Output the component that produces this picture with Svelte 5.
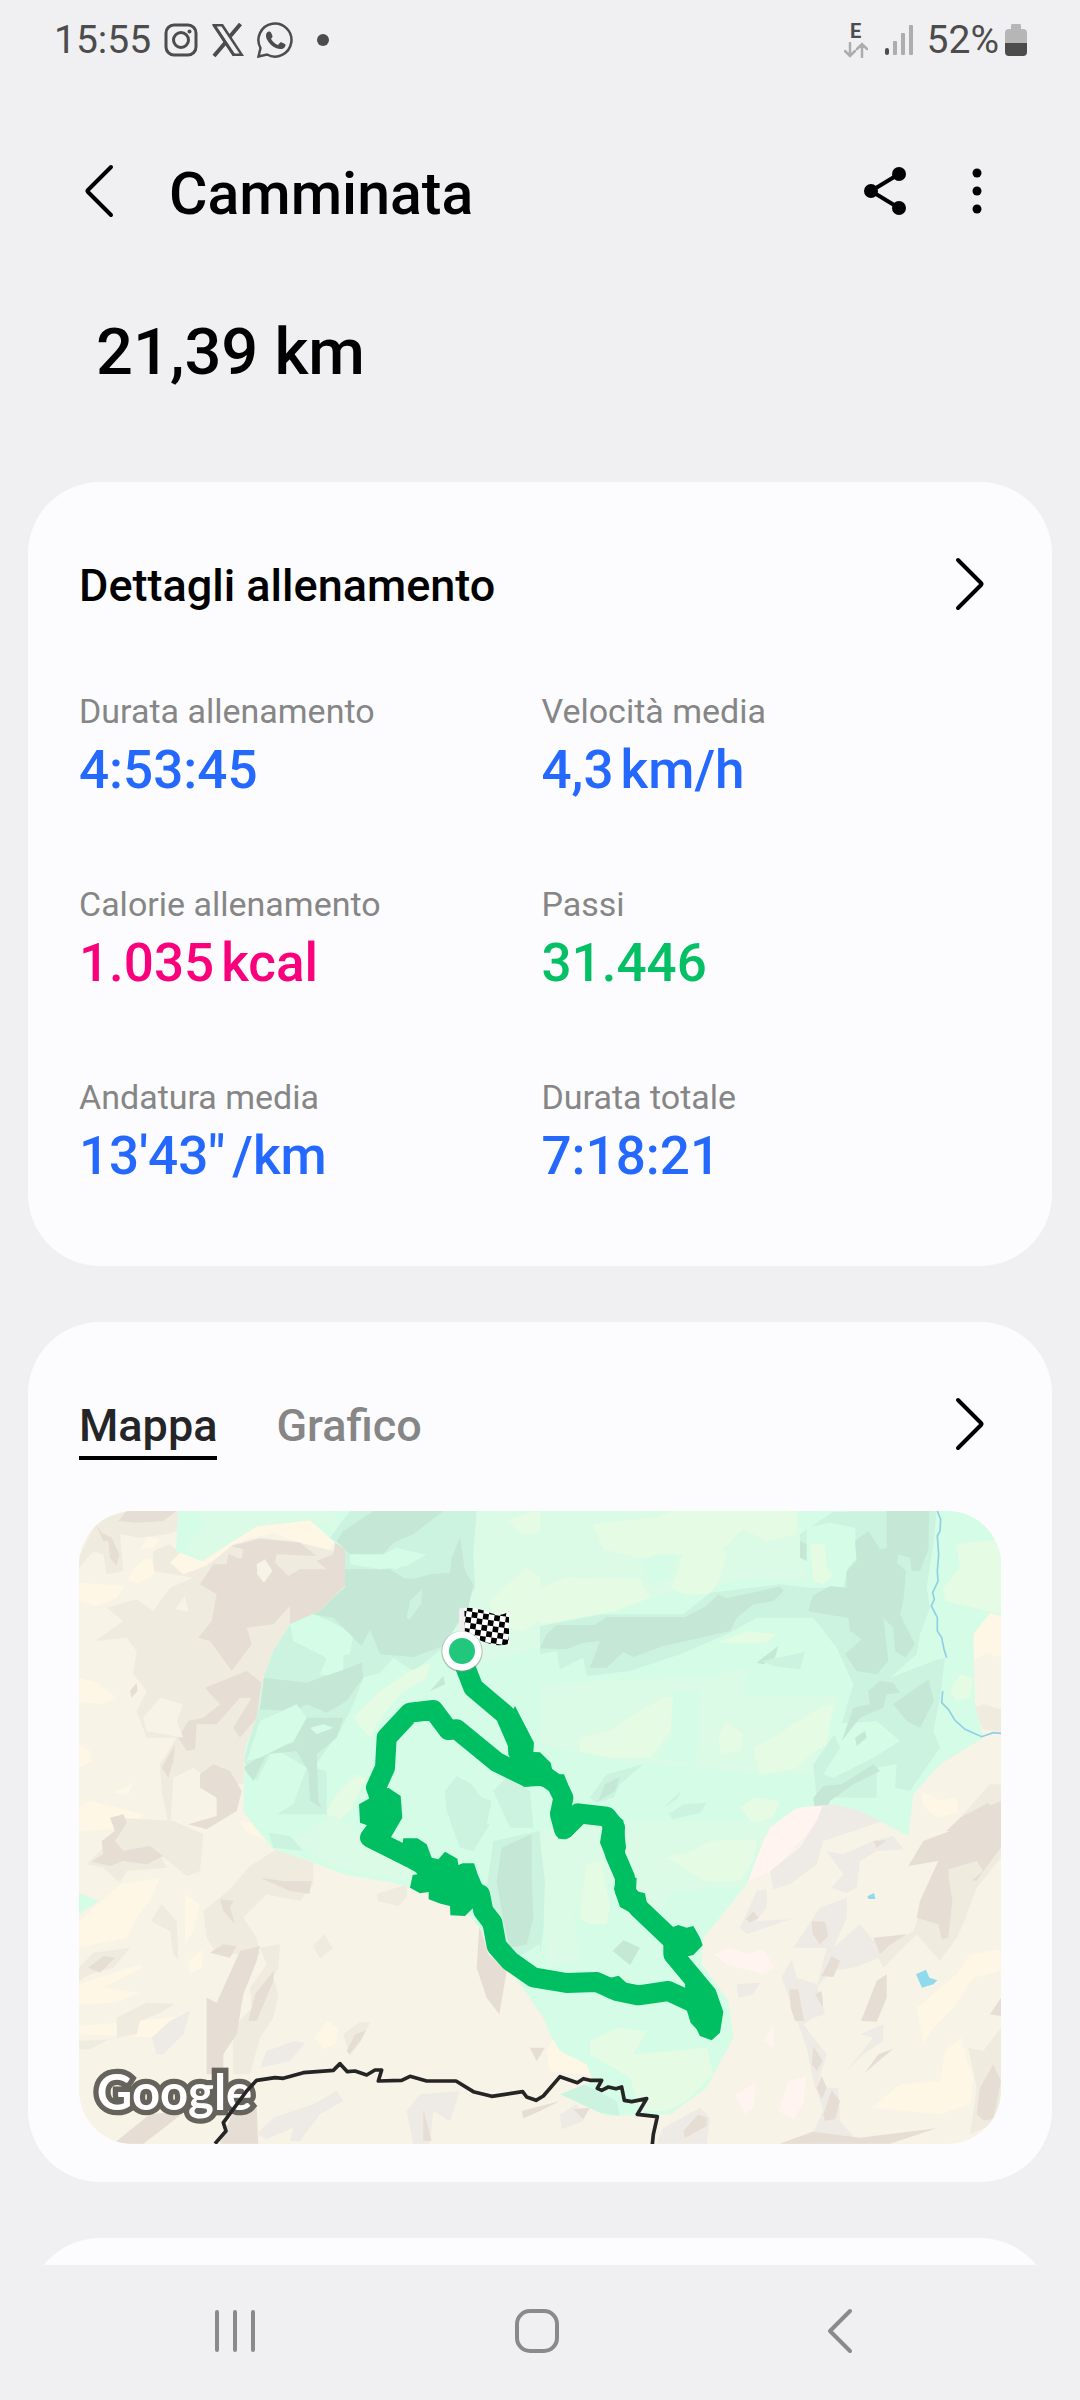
<script lang="ts">
  const stats = [
    { label: 'Durata allenamento', value: '4:53:45', unit: '', color: 'blue' },
    { label: 'Velocità media', value: '4,3', unit: 'km/h', color: 'blue' },
    { label: 'Calorie allenamento', value: '1.035', unit: 'kcal', color: 'pink' },
    { label: 'Passi', value: '31.446', unit: '', color: 'green' },
    { label: 'Andatura media', value: `13'43"`, unit: '/km', color: 'blue' },
    { label: 'Durata totale', value: '7:18:21', unit: '', color: 'blue' }
  ];

  let activeTab = $state('Mappa');
  const tabs = ['Mappa', 'Grafico'];

  // Terrain relief, split in four tiles. Each shape is [tone, points]
  const tiles = [
    {
      x: 0,
      y: 0,
      shapes: [
        ['sand-light', '320,215 360,180 430,212 520,150 590,108 750,88 822,150 800,190 640,125 560,145 450,215 370,252'],
        ['sand-shade', '57,200 110,90 200,60 355,60 350,120 320,130 240,140 180,130 190,240 140,250 130,190 100,180 57,230'],
        ['sand-shade', '280,180 330,160 360,185 330,215 370,250 440,225 520,160 600,140 700,150 820,180 855,210 850,260 780,350 690,400 640,480 610,560 590,690 555,770 550,880 470,880 400,830 340,860 330,1020 305,900 300,820 350,740 260,740 230,660 260,600 220,550 230,480 200,440 105,450 190,390 140,350 230,325 280,360 330,290 400,260 280,240'],
        ['sand-dark', '420,280 460,220 500,220 505,190 545,205 550,175 515,165 600,143 720,155 770,195 650,190 645,215 685,255 720,235 800,235 770,210 820,190 825,155 855,172 855,285 780,360 690,400 690,345 640,400 560,410 575,460 515,540 450,450 415,440 455,390 470,310'],
        ['sand-dark', '435,590 560,540 605,575 590,680 540,740 520,710 575,620 540,620 470,700 410,700 405,775 380,780 355,740 385,690 430,680 480,640'],
        ['sand-dark', '420,850 460,820 510,840 545,900 530,960 440,1015 385,1000 470,975 470,920 420,890'],
        ['sand-dark', '175,90 200,60 350,60 310,90 235,95'],
        ['sand-dark', '108,100 130,150 145,150 150,200 170,225 178,190 155,140 125,125'],
        ['sand-dark', '305,830 345,760 340,810 325,860'],
        ['sand-dark', '210,600 230,575 232,600 215,620'],
        ['sand', '590,220 615,205 637,240 612,275 592,250'],
        ['sand', '345,355 375,315 385,362'],
        ['sand', '250,680 300,620 370,640 350,690 370,740 260,720'],
        ['sand-light', '57,275 195,285 170,320 110,345 57,330'],
        ['sand-light', '57,560 110,575 170,620 130,640 57,632'],
        ['sand-light', '205,270 215,240 250,205 275,205 285,250 235,275'],
        ['sand-light', '240,175 265,138 300,145 280,170'],
        ['sand-light', '57,760 90,780 95,810 57,830'],
        ['sand-light', '160,905 220,875 205,910 185,912']
      ]
    },
    {
      x: 0,
      y: 990,
      shapes: [
        ['sand-light', '57,300 180,190 300,170 270,240 230,290 200,350 57,380'],
        ['sand-light', '57,-40 90,-60 250,-20 220,20 57,30'],
        ['sand-light', '57,490 240,430 245,440 130,500 240,515 170,545 57,550'],
        ['sand-light', '57,615 180,605 370,585 375,610 300,650 57,640'],
        ['sand-light', '375,220 420,250 400,330 375,370'],
        ['sand-light', '385,420 430,385 425,440 390,460'],
        ['sand-light', '765,650 800,600 835,620 830,665 790,685'],
        ['sand-light', '540,0 590,10 620,60 560,30'],
        ['sand-shade', '80,130 150,60 180,-10 340,0 430,40 420,150 380,165 300,100 320,140 200,150 180,185 130,140'],
        ['sand-shade', '430,270 510,205 570,135 650,85 760,125 760,190 720,240 620,220 590,250 550,290 590,350 600,400 540,400 470,400 440,350'],
        ['sand-shade', '600,380 660,370 655,440 640,470 655,520 640,590 600,650 570,760 520,760 520,620 575,560 570,500 620,430'],
        ['sand-shade', '57,440 100,395 210,380 160,440 90,460 57,480'],
        ['sand-shade', '170,590 260,545 345,548 300,575 240,600 230,640 170,650'],
        ['sand-shade', '950,220 1040,190 1040,230 1015,255 955,240'],
        ['sand-shade', '758,375 793,340 818,382 780,412'],
        ['sand-shade', '273,300 305,250 350,300 355,415 340,400 330,330'],
        ['sand-shade', '850,640 900,603 930,605 900,665 870,705'],
        ['sand-shade', '57,660 150,655 90,685 57,685'],
        ['sand-dark', '125,60 165,30 150,-10 190,-20 200,5 165,60 190,90 270,75 310,105 260,130 190,120 150,135 95,122 130,100'],
        ['sand-dark', '600,170 670,180 755,180 748,218 690,210'],
        ['sand-dark', '540,390 600,375 590,420 550,520 530,640 490,700 490,760 440,760 440,530 470,545'],
        ['sand-dark', '640,450 640,480 590,600 565,600 585,520'],
        ['sand-dark', '450,395 490,370 530,375 510,410'],
        ['sand-dark', '480,235 520,240 510,260 525,310 490,270'],
        ['sand-dark', '85,440 130,405 165,410 120,455'],
        ['sand-dark', '1258,310 1285,400 1340,450 1318,580 1280,530 1250,440'],
        ['sand-dark', '860,690 885,640 918,628 900,660 868,700'],
        ['sand-dark', '1410,680 1455,680 1430,720'],
        ['sand-dark', '160,968 270,880 380,868 300,930 250,968'],
        ['sand-dark', '480,968 520,870 590,860 595,968'],
        ['haze', '275,650 330,600 390,570 370,640 310,700 290,700'],
        ['haze', '620,690 700,660 735,665 690,720 600,740'],
        ['haze', '590,940 640,890 760,850 830,810 850,840 780,880 720,960 690,960 700,920 620,955'],
        ['haze', '1040,870 1080,820 1200,810 1170,900 1120,870 1110,968 1060,968'],
        ['sand-dark', '1090,865 1115,960 1090,960'],
        ['sand-dark', '1385,870 1500,840 1440,870 1390,892'],
        ['mint', '57,215 115,240 57,280']
      ]
    },
    {
      x: 1440,
      y: 0,
      shapes: [
        ['sand-light', '1300,430 1350,365 1383,375 1383,500 1340,485 1297,510'],
        ['sand-shade', '1300,650 1330,640 1383,655 1383,722 1330,715'],
        ['sand-light', '1145,900 1200,930 1250,920 1255,965 1190,980 1150,945'],
        ['sand-shade', '1270,970 1350,880 1383,880 1383,1020 1230,1020'],
        ['sand-dark', '1220,1020 1260,980 1345,935 1383,1020']
      ]
    },
    {
      x: 1440,
      y: 990,
      shapes: [
        ['blush', '625,180 660,80 700,0 800,-50 850,-40 820,20 780,60 700,150'],
        ['haze', '690,150 780,80 830,0 850,-50 950,-50 1030,0 850,60 830,130 750,190 700,205'],
        ['haze', '860,90 910,100 1000,60 1060,45 1090,85 1010,90 960,120 950,200 920,215 875,200 910,160'],
        ['haze', '760,380 840,260 920,230 920,290 880,380 960,310 1000,360 1100,340 1050,400 940,440 870,450 830,500 860,380'],
        ['haze', '600,320 650,210 680,205 680,260 650,300 750,295 620,340'],
        ['haze', '725,470 755,415 770,470 830,490 855,580 820,590 790,610 860,700 830,800 895,800 900,900 960,968 720,968 820,930 850,870 820,780 800,680'],
        ['haze', '370,920 480,860 510,890 500,968 350,968'],
        ['haze', '60,880 110,850 130,900 65,925'],
        ['haze', '590,490 660,485 640,520 595,530'],
        ['haze', '920,750 1000,650 960,640 1030,610 1030,660 970,700'],
        ['sand-shade', '1010,400 1120,330 1200,120 1280,0 1383,-40 1383,150 1320,200 1250,350 1200,420 1130,340 1030,440'],
        ['sand-shade', '1285,680 1330,690 1383,620 1383,900 1290,940 1310,800'],
        ['sand', '1310,200 1383,110 1383,380 1240,390'],
        ['sand-dark', '1105,135 1150,60 1230,30 1260,-10 1383,-60 1383,80 1330,150 1310,180 1225,160 1237,240 1225,350 1205,355 1195,310 1130,290 1140,240 1195,120'],
        ['sand-shade', '1225,145 1310,120 1330,150 1240,225'],
        ['sand-dark', '1000,350 1100,340 1045,375 1020,400'],
        ['sand-dark', '815,300 855,302 865,345 840,370 818,340'],
        ['sand-dark', '845,465 875,405 900,420 880,468'],
        ['sand-dark', '963,600 1010,480 1040,460 1040,530 1010,602'],
        ['sand-dark', '748,505 775,505 792,600 765,600 752,560'],
        ['sand-dark', '825,520 845,510 850,560'],
        ['sand-dark', '618,295 640,270 655,290 630,305'],
        ['sand-dark', '1000,60 1040,58 1010,80'],
        ['sand-dark', '820,675 848,720 830,750 815,730'],
        ['sand-dark', '850,880 875,808 900,840 885,895 855,900'],
        ['sand-dark', '830,800 845,765 860,800 845,835'],
        ['sand-dark', '720,968 820,932 960,950 1190,922 1050,968'],
        ['sand-dark', '430,930 475,880 500,890 500,915 435,950'],
        ['sand-dark', '975,755 1015,700 1060,683 1010,725'],
        ['sand-dark', '1310,880 1320,800 1360,730 1383,780 1360,895 1330,898'],
        ['sand-dark', '1350,580 1383,530 1383,585'],
        ['sand-dark', '100,865 150,860 130,895'],
        ['sand-light', '1130,560 1250,460 1290,400 1383,385 1383,450 1300,470 1240,560 1180,620 1150,665'],
        ['sand-light', '995,860 1080,790 1200,780 1215,690 1265,650 1280,720 1300,770 1290,850 1200,880'],
        ['sand-light', '20,690 40,650 140,720 160,765 30,750'],
        ['blush', '520,400 570,380 620,400 670,385 705,440 670,460 560,430'],
        ['blush', '585,820 650,785 640,860 615,880'],
        ['blush', '715,870 745,780 800,765 790,850 760,895'],
        ['blush', '670,660 700,610 700,680']
      ]
    }
  ];

  const forest = [
    {
      x: 0,
      y: 0,
      shapes: [
        ['mint-pale', '405,60 820,60 840,120 755,85 590,105 425,210 370,170 440,100'],
        ['mint-pale', '1250,60 1500,60 1500,450 1360,490 1250,520 1215,330'],
        ['mint-lime', '1340,90 1420,60 1500,80 1500,120 1390,130'],
        ['mint-lime', '1290,330 1400,230 1500,300 1500,350 1390,420 1300,400'],
        ['mint-shade', '810,140 870,60 1250,60 1240,180 1245,290 1150,470 1060,540 1000,500 960,545 910,560 880,640 840,720 760,830 800,840 800,970 650,970 700,940 740,830 640,770 590,870 550,810 600,640 620,490 690,400 855,285 855,175'],
        ['mint', '690,400 760,370 810,390 880,430 870,490 800,500 700,450'],
        ['mint', '800,500 820,455 850,495 850,560 780,550'],
        ['mint-dark', '850,120 940,60 1150,60 1060,130 1000,155 960,200 870,190 830,150'],
        ['mint-dark', '855,235 990,235 1030,260 1060,265 1110,250 1170,245 1175,200 1200,140 1215,240 1240,280 1225,350 1150,465 1060,498 960,490 930,415 905,465 820,380 760,370 855,290'],
        ['mint', '870,190 1100,190 1040,225 960,235 870,220'],
        ['mint', '950,200 1010,170 1090,190 1010,235 960,225'],
        ['mint-shade', '1040,380 1050,330 1085,295 1085,335 1050,385'],
        ['mint-dark', '612,560 740,575 840,540 905,515 910,560 860,630 800,665 740,640 700,660 600,655'],
        ['mint-dark', '550,830 640,770 700,755 740,680 850,680 830,740 770,790 775,930 785,950 750,930 745,840 710,780 620,790 580,870'],
        ['mint', '750,710 790,700 820,710 770,730'],
        ['mint', '600,690 710,640 740,680 700,750 600,800 560,810'],
        ['mint-lime', '880,680 960,600 1050,540 1110,515 1100,560 1020,610 950,700 930,740'],
        ['mint-lime', '830,910 890,850 920,860 870,960 810,1010 800,960'],
        ['mint-shade', '1155,900 1190,855 1235,880 1265,920 1295,930 1280,1000 1180,1010 1160,960'],
        ['mint-shade', '1300,900 1340,860 1410,900 1420,1010 1350,1010'],
        ['mint-dark', '1110,600 1150,555 1155,580']
      ]
    },
    {
      x: 0,
      y: 990,
      shapes: [
        ['mint-pale', '700,60 820,-20 900,40 1050,130 1060,180 960,165 830,140'],
        ['mint-shade', '625,35 690,45 730,90 640,80'],
        ['mint-shade', '1170,0 1290,10 1240,90 1200,80'],
        ['mint-shade', '1300,60 1440,30 1450,170 1440,370 1350,420 1310,300 1280,200'],
        ['mint-dark', '1325,80 1415,40 1415,180 1420,290 1400,370 1350,380 1330,300 1310,180']
      ]
    },
    {
      x: 1440,
      y: 0,
      shapes: [
        ['mint-pale', '0,60 780,60 800,270 620,260 500,290 420,300 200,350 0,400'],
        ['mint-lime', '160,100 340,80 400,60 770,60 770,130 680,150 610,115 540,180 410,190 300,200 190,175'],
        ['mint-lime', '0,290 80,260 300,265 330,320 230,360 0,400'],
        ['mint-lime', '395,290 430,190 560,180 540,260 510,310 430,310'],
        ['mint', '310,220 350,190 410,190 390,260 330,280'],
        ['mint-pale', '0,580 380,560 500,560 620,530 610,610 560,620 900,610 850,740 810,850 640,850 480,830 250,810 0,760'],
        ['mint', '390,600 480,600 470,820 350,800 400,730'],
        ['mint-lime', '120,740 210,720 300,660 370,620 400,620 390,720 330,800 210,800 120,780'],
        ['mint-lime', '640,770 700,740 760,700 840,650 880,640 860,760 810,790 770,830 660,850'],
        ['mint-lime', '535,740 560,690 610,730 600,780 545,790'],
        ['mint-lime', '530,455 620,420 710,430 680,455'],
        ['mint-shade', '0,405 190,370 430,370 510,305 720,280 810,290 850,290 910,290 930,200 900,100 780,180 780,130 880,62 1190,60 1180,160 1160,290 1170,350 1140,430 1130,490 1050,560 1180,510 1215,500 1200,620 1180,720 1200,770 1110,900 1065,890 1070,820 1010,830 1010,920 940,920 830,920 820,820 905,700 940,580 890,470 820,380 650,380 560,430 420,490 360,510 270,540 140,555 130,500 60,535 50,480 0,490'],
        ['mint', '800,110 870,95 945,110 950,200 900,260 820,280 800,200'],
        ['mint', '870,700 1010,690 1080,750 1000,800 880,860 850,850 900,770'],
        ['mint-lime', '810,160 855,160 860,230 880,250 850,280 820,270'],
        ['mint-dark', '20,430 50,402 165,402 200,378 435,378 500,345 535,310 560,322 720,287 730,300 700,330 640,340 590,380 570,420 460,445 370,465 280,498 250,483 200,530 150,530 180,450 130,455 80,475 0,472'],
        ['mint-dark', '1040,60 1168,60 1165,175 1140,240 1115,240 1110,200 1075,190 1070,215 1098,240 1090,330 1080,370 1100,410 1125,460 1095,500 1065,480 1060,410 1030,380 1045,510 1010,550 950,540 915,490 965,445 930,420 925,380 870,372 805,360 818,315 870,285 920,290 920,240 950,210 945,150 985,120 1020,175 1040,170'],
        ['mint-dark', '985,600 1020,570 1060,575 1080,605 1040,610 1030,650 960,680 905,750 940,650 990,640'],
        ['mint-dark', '1060,640 1165,565 1182,630 1140,710 1100,690'],
        ['mint-dark', '820,920 850,885 905,880 1000,820 1020,840 940,880 870,930 850,975 825,960'],
        ['mint-dark', '945,740 975,720 980,740 950,765'],
        ['mint-dark', '650,515 715,465 705,500 670,520'],
        ['mint-shade', '665,510 795,483 780,535 700,525'],
        ['mint-dark', '780,150 800,160 800,210 780,200'],
        ['mint-shade', '150,920 200,850 310,820 240,880 220,920 170,935'],
        ['mint-dark', '175,930 195,880 240,858 225,900'],
        ['mint-shade', '385,970 430,940 500,935 480,965 400,985'],
        ['mint-shade', '370,950 425,897 410,925'],
        ['mint-lime', '1210,290 1260,230 1250,160 1383,145 1383,370 1340,360 1215,330'],
        ['mint-lime', '1230,600 1260,550 1300,560 1290,620 1250,630'],
        ['mint-lime', '600,950 640,920 720,930 700,980 640,1000']
      ]
    },
    {
      x: 1440,
      y: 990,
      shapes: [
        ['mint-pale', '0,30 230,0 700,0 640,120 610,200 400,210 340,300 260,300 220,170 100,280 120,420 20,440'],
        ['mint-lime', '380,110 460,90 510,60 650,55 640,120 600,180 500,180'],
        ['mint-lime', '120,290 140,130 180,120 210,250 200,310 150,310'],
        ['mint-lime', '150,660 230,620 320,630 280,700 500,680 520,760 440,840 380,870 300,870 270,770 150,700'],
        ['mint-shade', '0,60 15,180 10,330 0,400'],
        ['mint-dark', '218,390 250,358 300,380 270,432'],
        ['mint-shade', '60,820 130,790 230,840 240,885 180,875']
      ]
    }
  ];

  // Start → summit → back to the finish flag
  const track =
    'M1205 500L1240 590L1335 670L1370 750L1392 800L1440 845L1490 880L1510 920L1500 970L1512 1015L1555 967L1640 977L1665 1010L1660 1060L1665 1090L1695 1160L1695 1200L1735 1250L1840 1350L1840 1390L1940 1510L1955 1570L1950 1600L1900 1535L1825 1500L1735 1513L1670 1500L1610 1473L1520 1476L1420 1459L1350 1410L1310 1365L1297 1295L1270 1260L1260 1210L1200 1180L1060 1105L930 1040L960 1000L970 950L948 890L975 830L980 740L1050 665L1120 657L1165 717L1190 715L1310 813L1400 857L1440 845';

  const border =
    'M465 1958L498 1920L490 1895L560 1800L590 1768L645 1760L670 1762L730 1745L820 1738L840 1718L862 1742L885 1740L920 1752L945 1737L965 1737L955 1770L1025 1768L1050 1756L1100 1770L1188 1770L1240 1802L1295 1816L1388 1802L1400 1818L1428 1828L1450 1815L1500 1757L1552 1775L1570 1763L1590 1768L1625 1768L1612 1792L1625 1798L1645 1788L1668 1793L1685 1788L1693 1828L1715 1832L1760 1823L1732 1870L1792 1877L1780 1930L1777 1960';
</script>

{#snippet chevron()}
  <svg class="icon" viewBox="0 0 72 72" aria-hidden="true">
    <path d="M26 12 49 35Q50 36 49 37L26 60" fill="none" stroke="currentColor" stroke-width="4" stroke-linecap="round" />
  </svg>
{/snippet}

{#snippet relief(groups)}
  {#each groups as tile}
    <g transform="translate({tile.x} {tile.y})">
      {#each tile.shapes as [tone, points]}
        <polygon class={tone} {points} />
      {/each}
    </g>
  {/each}
{/snippet}

<div class="screen">
  <div class="status">
    <span class="clock">15:55</span>
    <div class="notifications">
      <svg class="app" viewBox="0 0 36 36" aria-label="Instagram">
        <rect x="3" y="3" width="30" height="30" rx="8" fill="none" stroke="currentColor" stroke-width="3" />
        <circle cx="18" cy="18" r="7.5" fill="none" stroke="currentColor" stroke-width="3" />
        <circle cx="26.5" cy="9.5" r="2" fill="currentColor" />
      </svg>
      <svg class="app" viewBox="0 0 36 36" aria-label="X">
        <path d="M2 2h11l21 32H23zM6.500 4.500 24.500 31.500h5L11.500 4.500z" fill="currentColor" fill-rule="evenodd" />
        <path d="M3.500 2.500 24 33.500" fill="none" stroke="currentColor" stroke-width="3" />
        <path d="M30.500 2 19.500 15M15.500 20.500 4 34" fill="none" stroke="currentColor" stroke-width="4" />
      </svg>
      <svg class="app" viewBox="0 0 36 36" aria-label="WhatsApp">
        <path d="M1.500 34.500 3.500 26A16.500 16.500 0 1 1 10 32.500Z" fill="none" stroke="currentColor" stroke-width="2.500" />
        <path d="M10 10.500c1-1.500 3.500-1.500 4 0l1.500 3.500c.3 1-.8 2-1.500 2.800 1.500 3 4 5.200 7 6.200l2-2.300c.5-.6 1.200-.6 1.800-.3l3.200 1.600c1 .6.500 2.500-.5 3.500-2 2-5 2-8 .8-4.500-1.800-7.500-4.800-9.500-8.800-1.200-2.500-1.500-5 0-7z" fill="currentColor" />
      </svg>
      <span class="more"></span>
    </div>
    <div class="network">
      <span class="type">E</span>
      <svg class="arrows" viewBox="0 0 24 16" aria-hidden="true">
        <path d="M6 1v13M1 9l5 5 5-5M18 15V2M13 7l5-5 5 5" fill="none" stroke="#adadae" stroke-width="2.500" stroke-linecap="round" />
      </svg>
    </div>
    <svg class="signal" viewBox="0 0 28 30" aria-hidden="true">
      <rect x="0" y="23" width="4" height="7" rx="2" fill="#4c4c4c" />
      <rect x="8" y="16" width="4" height="14" rx="1" fill="#adadae" />
      <rect x="16" y="8" width="4" height="22" rx="1" fill="#adadae" />
      <rect x="24" y="0" width="4" height="30" rx="1" fill="#adadae" />
    </svg>
    <span class="percent">52%</span>
    <svg class="battery" viewBox="0 0 22 32" aria-hidden="true">
      <path d="M7 0h8q1 0 1 2v3h2q4 0 4 4v10H0V9q0-4 4-4h2V2q0-2 1-2z" fill="#b6b6b7" />
      <path d="M0 19h22v9q0 4-4 4H4q-4 0-4-4z" fill="#4c4c4c" />
    </svg>
  </div>

  <header>
    <button class="icon-btn" aria-label="Indietro">
      <svg class="icon" viewBox="0 0 72 72" aria-hidden="true">
        <path d="M46 12 23 35Q22 36 23 37L46 60" fill="none" stroke="currentColor" stroke-width="4" stroke-linecap="round" />
      </svg>
    </button>
    <h1>Camminata</h1>
    <button class="icon-btn" aria-label="Condividi">
      <svg class="icon" viewBox="0 0 72 72" aria-hidden="true">
        <path d="M49 19 21 36 49 53" fill="none" stroke="currentColor" stroke-width="4" />
        <circle cx="21" cy="36" r="7" />
        <circle cx="49" cy="19" r="7" />
        <circle cx="49" cy="53" r="7" />
      </svg>
    </button>
    <button class="icon-btn" aria-label="Altre opzioni">
      <svg class="icon" viewBox="0 0 72 72" aria-hidden="true">
        <circle cx="36" cy="18" r="4.500" />
        <circle cx="36" cy="36" r="4.500" />
        <circle cx="36" cy="54" r="4.500" />
      </svg>
    </button>
  </header>

  <p class="distance">21,39 km</p>

  <main>
    <section class="card details">
      <div class="card-head">
        <h2>Dettagli allenamento</h2>
        <button class="icon-btn" aria-label="Apri dettagli">{@render chevron()}</button>
      </div>
      <dl>
        {#each stats as stat}
          <div class="stat">
            <dt>{stat.label}</dt>
            <dd class={stat.color}>
              <span>{stat.value}</span>{#if stat.unit}<span>{stat.unit}</span>{/if}
            </dd>
          </div>
        {/each}
      </dl>
    </section>

    <section class="card track-card">
      <div class="card-head">
        <div class="tabs" role="tablist">
          {#each tabs as tab}
            <button
              class="tab"
              class:active={activeTab === tab}
              role="tab"
              aria-selected={activeTab === tab}
              onclick={() => (activeTab = tab)}
            >{tab}</button>
          {/each}
        </div>
        <button class="icon-btn" aria-label="Apri mappa">{@render chevron()}</button>
      </div>

      <svg class="map" viewBox="57 60 2766 1899" preserveAspectRatio="xMidYMid slice" role="img" aria-label="Percorso">
        <defs>
          <clipPath id="forest">
            <path d="M355 60 348 180 425 210 520 150 590 105 750 88 820 150 855 175 855 285 780 360 690 400 640 480 610 560 590 680 555 770 550 960 590 1015 640 1075 750 1110 850 1150 1000 1175 1050 1190 1200 1240 1280 1340 1380 1480 1450 1580 1470 1630 1500 1680 1580 1720 1600 1770 1500 1810 1640 1875 1830 1870 1940 1790 2020 1640 2005 1530 1925 1420 1930 1340 2060 1180 2110 1050 2130 1010 2210 950 2320 940 2400 960 2545 1035 2560 910 2640 820 2770 740 2745 640 2740 430 2790 365 2823 375 2823 60Z" />
          </clipPath>
          <pattern id="checks" width="34" height="34" patternUnits="userSpaceOnUse" patternTransform="rotate(8)">
            <rect width="34" height="34" fill="#fff" />
            <rect width="17" height="17" fill="#000" />
            <rect x="17" y="17" width="17" height="17" fill="#000" />
          </pattern>
        </defs>

        <rect class="sand" x="57" y="60" width="2766" height="1899" />
        {@render relief(tiles)}
        <g clip-path="url(#forest)">
          <rect class="mint" x="57" y="60" width="2766" height="1899" />
          {@render relief(forest)}
        </g>

        <path class="river" d="M2632 60 2642 85 2640 120 2632 135 2636 190 2632 240 2634 270 2618 305 2623 325 2614 345 2632 380 2632 420 2645 440 2652 475 2660 500M2648 600 2645 635 2665 655 2685 688 2715 715 2765 737 2800 725 2823 727" />
        <polygon class="lake" points="2568,1450 2598,1436 2608,1460 2632,1468 2620,1480 2586,1490" />
        <polygon class="lake" points="2422,1216 2442,1206 2446,1224 2426,1224" />

        <text class="watermark" x="110" y="1858">Google</text>
        <path class="border" d={border} />

        <path class="track" d={track} />
        <g class="scribble">
          <polygon points="897,940 985,890 1022,915 1027,980 985,1052 935,1066 905,1030 930,1006 900,995" />
          <polygon points="1025,1075 1030,1042 1072,1042 1100,1060 1115,1100 1135,1105 1155,1082 1192,1103 1195,1122 1208,1117 1242,1117 1253,1150 1272,1195 1293,1220 1290,1260 1240,1250 1215,1275 1171,1273 1170,1245 1142,1238 1106,1225 1106,1203 1080,1207 1050,1190 1058,1152 1072,1150" />
          <polygon points="1340,690 1365,645 1422,755 1420,783 1440,784 1472,815 1480,850 1512,850 1536,910 1490,900 1440,885 1390,887 1345,790" />
          <polygon points="1470,960 1480,1000 1495,1043 1532,1037 1572,998 1555,960" />
          <polygon points="1620,1055 1628,1005 1645,950 1690,988 1698,1070 1690,1100 1635,1092" />
          <polygon points="1662,1195 1668,1160 1730,1160 1728,1200 1755,1207 1764,1255 1720,1270 1680,1248" />
          <polygon points="1640,1463 1676,1454 1702,1478 1690,1520 1645,1522 1615,1500" />
          <polygon points="1820,1315 1855,1302 1880,1310 1900,1305 1920,1340 1928,1363 1900,1392 1875,1398 1820,1390" />
          <polygon points="1875,1480 1930,1480 1970,1505 1990,1562 1980,1625 1955,1648 1920,1635 1910,1615 1892,1595 1878,1550" />
        </g>

        <rect x="1197" y="350" width="20" height="90" rx="8" fill="#eee" />
        <path d="M1213 350Q1255 350 1290 365T1347 360V458Q1310 470 1265 450T1215 440Z" fill="url(#checks)" />
        <circle cx="1206" cy="482" r="62" fill="#7b8c83" opacity="0.500" />
        <circle cx="1206" cy="480" r="59" fill="#fff" />
        <circle cx="1206" cy="480" r="39" fill="#21c77d" />
      </svg>
    </section>

    <section class="card next"></section>
  </main>

  <nav>
    <button class="icon-btn" aria-label="Recenti">
      <svg class="icon" viewBox="0 0 72 72" aria-hidden="true">
        <path d="M18 17v38M36 17v38M54 17v38" fill="none" stroke="currentColor" stroke-width="4" stroke-linecap="round" />
      </svg>
    </button>
    <button class="icon-btn" aria-label="Home">
      <svg class="icon" viewBox="0 0 72 72" aria-hidden="true">
        <rect x="16" y="16" width="40" height="40" rx="13" fill="none" stroke="currentColor" stroke-width="4" />
      </svg>
    </button>
    <button class="icon-btn" aria-label="Indietro">
      <svg class="icon" viewBox="0 0 72 72" aria-hidden="true">
        <path d="M47 16 27 36 47 56" fill="none" stroke="currentColor" stroke-width="4" stroke-linecap="round" stroke-linejoin="round" />
      </svg>
    </button>
  </nav>
</div>

<style>
  :global(body) {
    background: #f0f0f2;
    font-family: Roboto, sans-serif;
    color: #000;
  }

  .screen {
    display: flex;
    flex-direction: column;
    height: 100vh;
    overflow: hidden;
  }

  h1, h2, p, dl, dd {
    margin: 0;
  }

  button {
    padding: 0;
    border: none;
    background: none;
    color: inherit;
    font: inherit;
    cursor: pointer;
  }

  svg {
    display: block;
    flex: none;
  }

  .icon-btn,
  .icon {
    width: 72px;
    height: 72px;
  }

  /* status bar */
  .status {
    display: flex;
    align-items: center;
    flex: none;
    height: 80px;
    padding: 0 53px 0 54px;
    color: #4c4c4c;
    font-size: 39px;
  }

  .notifications {
    display: flex;
    align-items: center;
    gap: 11px;
    flex: 1;
    margin-left: 12px;
  }

  .app {
    width: 36px;
    height: 36px;
  }

  .more {
    width: 12px;
    height: 12px;
    margin-left: 13px;
    border-radius: 50%;
    background: #4c4c4c;
  }

  .network {
    display: flex;
    flex-direction: column;
    align-items: center;
    width: 26px;
    gap: 2px;
  }

  .type {
    font-size: 20px;
    line-height: 18px;
    font-weight: 700;
  }

  .arrows {
    width: 24px;
    height: 16px;
  }

  .signal {
    width: 28px;
    height: 30px;
    margin: 0 14px 0 16px;
  }

  .battery {
    width: 22px;
    height: 32px;
    margin-left: 6px;
  }

  /* title */
  header {
    display: flex;
    align-items: center;
    gap: 19px;
    flex: none;
    margin-top: 75px;
    padding: 0 67px 0 65px;
  }

  h1 {
    flex: 1;
    margin-left: 13px;
    padding-top: 5px;
    font-size: 59px;
    line-height: 67px;
    font-weight: 500;
  }

  .distance {
    flex: none;
    padding: 85px 96px 90px;
    font-size: 65px;
    line-height: 80px;
    font-weight: 500;
  }

  /* cards */
  main {
    display: flex;
    flex-direction: column;
    flex: 1;
    min-height: 0;
    gap: 56px;
    padding: 0 28px;
    overflow: hidden;
  }

  .card {
    flex: none;
    border-radius: 72px;
    background: #fcfcfe;
    padding: 66px 48px 0 51px;
  }

  .card-head {
    display: flex;
    align-items: center;
    justify-content: space-between;
  }

  h2 {
    padding-top: 3px;
    font-size: 45px;
    line-height: 69px;
    font-weight: 500;
  }

  .details {
    padding-bottom: 74px;
  }

  dl {
    display: grid;
    grid-template-columns: 1fr 1fr;
    row-gap: 76px;
    margin-top: 69px;
  }

  dt {
    color: #868686;
    font-size: 34px;
    line-height: 44px;
  }

  dd {
    display: flex;
    gap: 7px;
    padding-top: 1px;
    font-size: 53px;
    line-height: 72px;
    font-weight: 500;
  }

  .blue {
    color: #2468fd;
  }

  .pink {
    color: #f9007c;
  }

  .green {
    color: #05bf64;
  }

  .track-card {
    padding-right: 48px;
    padding-bottom: 38px;
  }

  .tabs {
    display: flex;
    gap: 59px;
  }

  .tab {
    padding-top: 7px;
    font-size: 45px;
    line-height: 61px;
    font-weight: 500;
    color: #868686;
    border-bottom: 4px solid transparent;
  }

  .tab.active {
    color: #252528;
    border-bottom-color: #000;
  }

  .map {
    width: calc(100% - 3px);
    aspect-ratio: 922 / 633;
    margin-top: 51px;
    border-radius: 54px;
  }

  .next {
    height: 300px;
  }

  /* map tones */
  .sand { fill: #f7f3e6; }
  .sand-light { fill: #fff7e6; }
  .sand-shade { fill: #efebdf; }
  .sand-dark { fill: #e6ddd4; }
  .haze { fill: #eeebe6; }
  .blush { fill: #fff4ef; }
  .mint { fill: #d4fce6; }
  .mint-pale { fill: #dcfbe6; }
  .mint-lime { fill: #e6fbe4; }
  .mint-shade { fill: #ccf3df; }
  .mint-dark { fill: #c4e7d6; }
  .lake { fill: #90daee; }

  .river {
    fill: none;
    stroke: #90d0e6;
    stroke-width: 5px;
  }

  .border {
    fill: none;
    stroke: #252525;
    stroke-width: 11px;
    stroke-linejoin: round;
  }

  .track {
    fill: none;
    stroke: #00bf63;
    stroke-width: 60px;
    stroke-linejoin: round;
  }

  .scribble {
    fill: #00bf63;
  }

  .watermark {
    font-family: Lato, sans-serif;
    font-size: 147px;
    font-weight: 700;
    fill: #fff;
    stroke: #66635c;
    stroke-width: 32px;
    paint-order: stroke;
  }

  /* system bar */
  nav {
    display: flex;
    align-items: center;
    justify-content: space-between;
    flex: none;
    height: 135px;
    padding: 0 205px 4px 199px;
    box-sizing: border-box;
    color: #8a8a8a;
  }
</style>
